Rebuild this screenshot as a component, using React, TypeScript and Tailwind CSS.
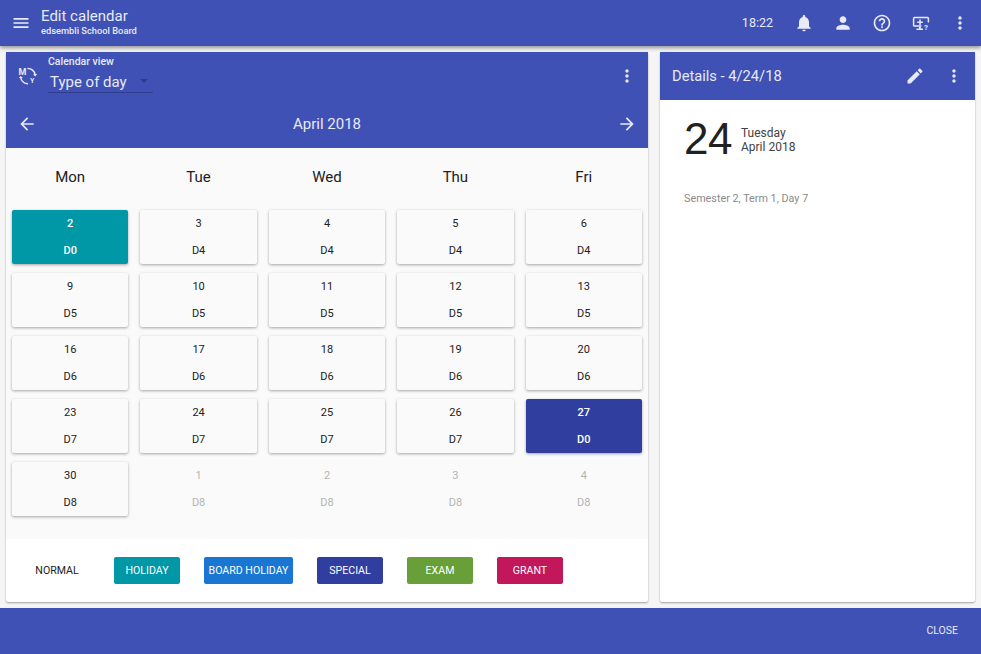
import React from "react";

const MENU = "M3 18h18v-2H3v2zm0-5h18v-2H3v2zm0-7v2h18V6H3z";
const BELL = "M12 22c1.1 0 2-.9 2-2h-4c0 1.1.89 2 2 2zm6-6v-5c0-3.07-1.64-5.64-4.5-6.32V4c0-.83-.67-1.5-1.5-1.5s-1.5.67-1.5 1.5v.68C7.63 5.36 6 7.92 6 11v5l-2 2v1h16v-1l-2-2z";
const PERSON = "M12 12c2.21 0 4-1.79 4-4s-1.79-4-4-4-4 1.79-4 4 1.79 4 4 4zm0 2c-2.67 0-8 1.34-8 4v2h16v-2c0-2.66-5.33-4-8-4z";
const HELP = "M11 18h2v-2h-2v2zm1-16C6.48 2 2 6.48 2 12s4.48 10 10 10 10-4.48 10-10S17.52 2 12 2zm0 18c-4.41 0-8-3.59-8-8s3.59-8 8-8 8 3.59 8 8-3.59 8-8 8zm0-14c-2.21 0-4 1.79-4 4h2c0-1.1.9-2 2-2s2 .9 2 2c0 2-3 1.75-3 5h2c0-2.25 3-2.5 3-5 0-2.21-1.79-4-4-4z";
const MORE = "M12 8c1.1 0 2-.9 2-2s-.9-2-2-2-2 .9-2 2 .9 2 2 2zm0 2c-1.1 0-2 .9-2 2s.9 2 2 2 2-.9 2-2-.9-2-2-2zm0 6c-1.1 0-2 .9-2 2s.9 2 2 2 2-.9 2-2-.9-2-2-2z";
const EDIT = "M3 17.25V21h3.75L17.81 9.94l-3.75-3.75L3 17.25zM20.71 7.04c.39-.39.39-1.02 0-1.41l-2.34-2.34c-.39-.39-1.02-.39-1.41 0l-1.83 1.83 3.75 3.75 1.83-1.83z";
const BACK = "M20 11H7.83l5.59-5.59L12 4l-8 8 8 8 1.41-1.41L7.83 13H20v-2z";
const FORWARD = "M12 4l-1.41 1.41L16.17 11H4v2h12.17l-5.58 5.59L12 20l8-8z";

function Icon({ d, size = 20 }: { d: string; size?: number }) {
  return (
    <svg width={size} height={size} viewBox="0 0 24 24" fill="currentColor" className="shrink-0">
      <path d={d} />
    </svg>
  );
}

function ViewIcon() {
  return (
    <svg width="20" height="20" viewBox="0 0 20 20" fill="none" className="shrink-0 text-[#e8eaf6]">
      <path d="M9.5 2.6a7.2 7.2 0 0 1 7.6 6.2" stroke="currentColor" strokeWidth="1.5" />
      <path d="M2.7 11.5a7.2 7.2 0 0 0 7.3 6.2" stroke="currentColor" strokeWidth="1.5" />
      <path d="M15 8.2l2.2 2.2 2-2.4z" fill="currentColor" />
      <path d="M0.8 12l1.9-2 2.3 2z" fill="currentColor" />
      <text x="0.6" y="9.4" fontSize="9" fontWeight="700" fill="currentColor" fontFamily="Roboto, sans-serif">M</text>
      <text x="12.2" y="17" fontSize="6.5" fontWeight="700" fill="currentColor" fontFamily="Roboto, sans-serif">Y</text>
    </svg>
  );
}

function ScreenHelpIcon() {
  return (
    <svg width="20" height="20" viewBox="0 0 20 20" fill="none" className="shrink-0">
      <path d="M10.5 13H3.4a.8.8 0 0 1-.8-.8V5.4a.8.8 0 0 1 .8-.8h13.2a.8.8 0 0 1 .8.8V9.5" stroke="currentColor" strokeWidth="1.5" />
      <path d="M5.5 17h6.5v-1.4H9.800v-2H8v2H5.500z" fill="currentColor" />
      <path d="M8.300 6.400h1.500v2h2v1.500h-2v2H8.300V9.900h-2V8.400h2z" fill="currentColor" />
      <text x="13" y="17.200" fontSize="8" fontWeight="700" fill="currentColor" fontFamily="Roboto, sans-serif">?</text>
    </svg>
  );
}

type Cell = { day: number; code: string; tone?: "teal" | "indigo" | "muted" };

const rows: Cell[][] = [
  [{ day: 2, code: "D0", tone: "teal" }, { day: 3, code: "D4" }, { day: 4, code: "D4" }, { day: 5, code: "D4" }, { day: 6, code: "D4" }],
  [{ day: 9, code: "D5" }, { day: 10, code: "D5" }, { day: 11, code: "D5" }, { day: 12, code: "D5" }, { day: 13, code: "D5" }],
  [{ day: 16, code: "D6" }, { day: 17, code: "D6" }, { day: 18, code: "D6" }, { day: 19, code: "D6" }, { day: 20, code: "D6" }],
  [{ day: 23, code: "D7" }, { day: 24, code: "D7" }, { day: 25, code: "D7" }, { day: 26, code: "D7" }, { day: 27, code: "D0", tone: "indigo" }],
  [{ day: 30, code: "D8" }, { day: 1, code: "D8", tone: "muted" }, { day: 2, code: "D8", tone: "muted" }, { day: 3, code: "D8", tone: "muted" }, { day: 4, code: "D8", tone: "muted" }],
];

function DayCell({ cell }: { cell: Cell }) {
  let tone = "bg-[#fafafa] text-[#212121] rounded-[2px] shadow-[0_1px_3px_rgba(0,0,0,0.35)]";
  if (cell.tone === "teal") tone = "bg-[#0097a7] text-white font-medium rounded-[2px] shadow-[0_1px_3px_rgba(0,0,0,0.35)]";
  if (cell.tone === "indigo") tone = "bg-[#303f9f] text-white font-medium rounded-[2px] shadow-[0_1px_3px_rgba(0,0,0,0.35)]";
  if (cell.tone === "muted") tone = "text-[#b4b4b4]";
  return (
    <div className={`h-[54px] flex flex-col items-center text-[11px] leading-[14px] pt-[7px] ${tone}`}>
      <span>{cell.day}</span>
      <span className="mt-[13px]">{cell.code}</span>
    </div>
  );
}

const legend = [
  { label: "NORMAL", cls: "w-[66px] text-[#212121]" },
  { label: "HOLIDAY", cls: "w-[66px] bg-[#0097a7] text-white" },
  { label: "BOARD HOLIDAY", cls: "w-[89px] bg-[#1976d2] text-white" },
  { label: "SPECIAL", cls: "w-[66px] bg-[#303f9f] text-white" },
  { label: "EXAM", cls: "w-[66px] bg-[#689f38] text-white" },
  { label: "GRANT", cls: "w-[66px] bg-[#c2185b] text-white" },
];

export default function App() {
  return (
    <div className="h-screen flex flex-col bg-[#f5f5f5] font-['Roboto',sans-serif] overflow-hidden">
      {/* Top bar */}
      <header className="relative h-[46px] shrink-0 bg-[#3f51b5] text-[#e8eaf6] flex items-center shadow-[0_2px_4px_rgba(0,0,0,0.4)]">
        <div className="w-[41px] pl-[11px]">
          <Icon d={MENU} />
        </div>
        <div className="flex flex-col">
          <span className="text-[15px] leading-[17px] -mt-[1px]">Edit calendar</span>
          <span className="text-[9.3px] leading-[12px] font-medium">edsembli School Board</span>
        </div>
        <div className="ml-auto flex items-center">
          <span className="text-[12.5px] mr-[21px]">18:22</span>
          <div className="flex items-center gap-[19px] pr-[11px]">
            <Icon d={BELL} />
            <Icon d={PERSON} />
            <Icon d={HELP} />
            <ScreenHelpIcon />
            <Icon d={MORE} />
          </div>
        </div>
      </header>

      <main className="flex-1 min-h-0 flex gap-[12px] p-[6px]">
        {/* Calendar card */}
        <section className="w-[642px] shrink-0 flex flex-col bg-white rounded-[2px] shadow-[0_1px_2px_rgba(0,0,0,0.35)]">
          <div className="h-[96px] shrink-0 bg-[#3f51b5] text-[#e8eaf6]">
            <div className="h-[48px] flex items-start pl-[12px] pr-[11px]">
              <div className="mt-[14px]">
                <ViewIcon />
              </div>
              <div className="ml-[10px] mt-[4px]">
                <div className="text-[10.5px] leading-[12px] font-medium">Calendar view</div>
                <div className="w-[105px] h-[23px] mt-[2px] pl-[2px] flex items-center justify-between border-b border-[#2f3d8f] text-[15px]">
                  <span className="mt-[3px]">Type of day</span>
                  <span className="mr-[5px] w-0 h-0 border-x-[4px] border-x-transparent border-t-[4px] border-t-[#2d3a86]" />
                </div>
              </div>
              <div className="ml-auto mt-[14px]">
                <Icon d={MORE} />
              </div>
            </div>
            <div className="h-[48px] flex items-center justify-between px-[11px] text-[15px]">
              <Icon d={BACK} size={20} />
              <span>April 2018</span>
              <Icon d={FORWARD} size={20} />
            </div>
          </div>

          <div className="h-[391px] shrink-0 bg-[#fafafa]">
            <div className="grid grid-cols-5 h-[57px] pt-[1px] items-center text-[15px] text-[#212121] text-center">
              {["Mon", "Tue", "Wed", "Thu", "Fri"].map((d) => (
                <span key={d}>{d}</span>
              ))}
            </div>
            <div className="grid grid-cols-5 gap-x-[12px] gap-y-[9px] px-[6px] pt-[5px]">
              {rows.flat().map((c, i) => (
                <DayCell key={i} cell={c} />
              ))}
            </div>
          </div>

          <div className="flex-1 flex items-start gap-[24px] pl-[18px] pt-[18px]">
            {legend.map((l) => (
              <div key={l.label} className={`h-[27px] pt-[1px] flex items-center justify-center rounded-[2px] text-[10.6px] ${l.cls}`}>
                {l.label}
              </div>
            ))}
          </div>
        </section>

        {/* Details card */}
        <aside className="w-[315px] shrink-0 bg-white rounded-[2px] shadow-[0_1px_2px_rgba(0,0,0,0.35)]">
          <div className="h-[48px] bg-[#3f51b5] text-[#e8eaf6] flex items-center pl-[12px] pr-[11px]">
            <span className="text-[14.7px]">Details - 4/24/18</span>
            <div className="ml-auto flex items-center gap-[19px]">
              <Icon d={EDIT} />
              <Icon d={MORE} />
            </div>
          </div>
          <div className="pl-[24px] pt-[12px]">
            <div className="flex items-center">
              <span className="text-[44px] leading-[54px] font-['Liberation_Sans',sans-serif] text-[#212121] tracking-[-0.5px]">24</span>
              <div className="ml-[9px] mt-[1px] text-[12px] leading-[14px] text-[#424242]">
                <div>Tuesday</div>
                <div>April 2018</div>
              </div>
            </div>
            <div className="mt-[25px] text-[10.8px] text-[#8a8a8a]">Semester 2, Term 1, Day 7</div>
          </div>
        </aside>
      </main>

      <footer className="h-[46px] shrink-0 bg-[#3f51b5] text-[#e8eaf6] flex items-center justify-end pr-[23px]">
        <span className="text-[10.5px]">CLOSE</span>
      </footer>
    </div>
  );
}
